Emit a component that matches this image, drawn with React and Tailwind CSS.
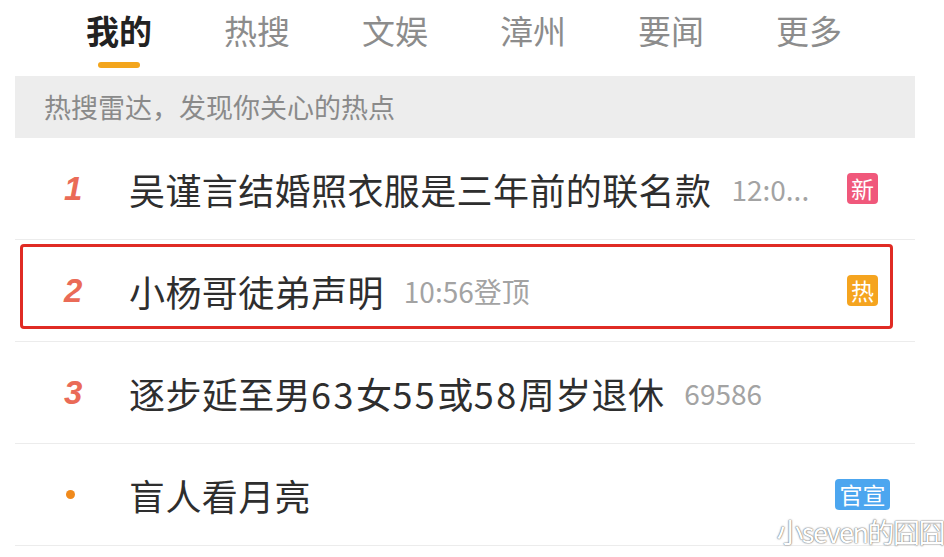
import React from 'react';

const font = { fontFamily: '"Noto Sans CJK SC", "Noto Sans", sans-serif' };

const tabs = ['我的', '热搜', '文娱', '漳州', '要闻', '更多'];

const Num = ({ children }) => <span className="tracking-[2.5px]">{children}</span>;

const rows = [
  { rank: '1', title: '吴谨言结婚照衣服是三年前的联名款', meta: '12:0...', badge: '新', badgeClass: 'bg-[#f0587b] w-[31px] mr-[37px]' },
  { rank: '2', title: '小杨哥徒弟声明', meta: '10:56登顶', badge: '热', badgeClass: 'bg-[#f5a41f] w-[31px] mr-[37px]', boxed: true },
  {
    rank: '3',
    title: (
      <>
        逐步延至男<Num>63</Num>女<Num>55</Num>或<Num>58</Num>周岁退休
      </>
    ),
    meta: '69586',
  },
  { dot: true, title: '盲人看月亮', badge: '官宣', badgeClass: 'bg-[#4ca6ef] w-[55px] mr-[25px]' },
];

export default function App() {
  return (
    <div className="relative w-[944px] h-[557px] bg-white overflow-hidden" style={font}>
      <div className="flex h-[76px] pl-[86px] gap-[72px]">
        {tabs.map((t, i) => (
          <div key={t} className="flex flex-col items-center">
            <span
              className={`mt-[8px] leading-[44px] text-[33px] ${i === 0 ? 'font-bold text-[#222]' : 'text-[#8c8c8c]'}`}
            >
              {t}
            </span>
            {i === 0 && <span className="mt-[10px] h-[6px] w-[42px] rounded-full bg-[#f3a51c]" />}
          </div>
        ))}
      </div>

      <div className="ml-[15px] w-[900px]">
        <div className="h-[62px] bg-[#ededed] flex items-center pl-[29px] text-[27px] text-[#8a8a8a]">
          热搜雷达，发现你关心的热点
        </div>

        {rows.map((r, i) => (
          <div key={i} className="relative h-[102px] flex items-center border-b border-[#ececec]">
            <div className="w-[114px] pl-[49px] flex items-center">
              {r.dot ? (
                <span className="ml-[2px] h-[9px] w-[9px] rounded-full bg-[#f08a1c]" />
              ) : (
                <span
                  className="text-[33px] font-bold italic text-[#ea6b57] leading-none"
                  style={{ fontFamily: '"Liberation Sans", sans-serif' }}
                >
                  {r.rank}
                </span>
              )}
            </div>
            <span className="text-[36px] tracking-[0.4px] text-[#2e2e2e] leading-none whitespace-nowrap">
              {r.title}
            </span>
            {r.meta && (
              <span className="ml-[20px] text-[28px] text-[#a3a3a3] leading-none whitespace-nowrap">{r.meta}</span>
            )}
            {r.badge && (
              <span
                className={`ml-auto h-[31px] rounded-[4px] flex items-center justify-center text-[23px] text-white leading-none ${r.badgeClass}`}
              >
                {r.badge}
              </span>
            )}
            {r.boxed && (
              <div className="absolute left-[5px] top-[4px] w-[873px] h-[85px] border-[3px] border-[#e02b24] rounded-[4px]" />
            )}
          </div>
        ))}
      </div>

      <div className="absolute right-0 top-[518px] text-[27px] text-white leading-none [text-shadow:0_0_2px_#777,0_0_1px_#555] tracking-[-1.5px]">
        小seven的囧囧
      </div>
    </div>
  );
}
